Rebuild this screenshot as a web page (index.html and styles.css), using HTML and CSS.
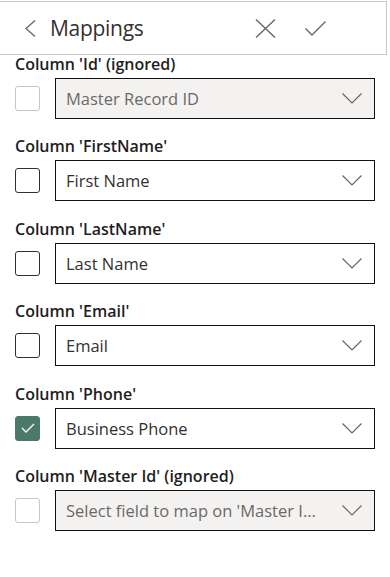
FILE: index.html
```html
<!DOCTYPE html>
<html>
  <head>
    <meta charset="UTF-8" />
    <title>Mappings</title>
    <link rel="stylesheet" href="styles.css">
  </head>

  <body>
    <div class="panel">
      <div class="panel-header">
        <button class="icon-btn back" type="button">
          <svg width="12" height="17" viewBox="0 0 12 17"><path d="M11 0.5 L2 8.5 L11 16.5" fill="none" stroke="#666" stroke-width="1.3"/></svg>
        </button>
        <h2>Mappings</h2>
        <button class="icon-btn close" type="button">
          <svg width="21" height="19" viewBox="0 0 21 19"><path d="M1 0.5 L20 18.5 M20 0.5 L1 18.5" fill="none" stroke="#666" stroke-width="1.4"/></svg>
        </button>
        <button class="icon-btn ok" type="button">
          <svg width="21" height="15" viewBox="0 0 21 15"><path d="M0.5 7.5 L7 14 L20.5 0.5" fill="none" stroke="#666" stroke-width="1.4"/></svg>
        </button>
      </div>

      <div class="mapping-list">
        <div class="mapping">
          <label>Column 'Id' (ignored)</label>
          <div class="mapping-row">
            <span class="check disabled"></span>
            <div class="select disabled">
              <span>Master Record ID</span>
              <svg class="chevron" width="20" height="11" viewBox="0 0 20 11"><path d="M0.5 0.5 L10 10 L19.5 0.5" fill="none" stroke="#666" stroke-width="1.2"/></svg>
            </div>
          </div>
        </div>

        <div class="mapping">
          <label>Column 'FirstName'</label>
          <div class="mapping-row">
            <span class="check"></span>
            <div class="select">
              <span>First Name</span>
              <svg class="chevron" width="20" height="11" viewBox="0 0 20 11"><path d="M0.5 0.5 L10 10 L19.5 0.5" fill="none" stroke="#666" stroke-width="1.2"/></svg>
            </div>
          </div>
        </div>

        <div class="mapping">
          <label>Column 'LastName'</label>
          <div class="mapping-row">
            <span class="check"></span>
            <div class="select">
              <span>Last Name</span>
              <svg class="chevron" width="20" height="11" viewBox="0 0 20 11"><path d="M0.5 0.5 L10 10 L19.5 0.5" fill="none" stroke="#666" stroke-width="1.2"/></svg>
            </div>
          </div>
        </div>

        <div class="mapping">
          <label>Column 'Email'</label>
          <div class="mapping-row">
            <span class="check"></span>
            <div class="select">
              <span>Email</span>
              <svg class="chevron" width="20" height="11" viewBox="0 0 20 11"><path d="M0.5 0.5 L10 10 L19.5 0.5" fill="none" stroke="#666" stroke-width="1.2"/></svg>
            </div>
          </div>
        </div>

        <div class="mapping">
          <label>Column 'Phone'</label>
          <div class="mapping-row">
            <span class="check checked">
              <svg width="14" height="10" viewBox="0 0 14 10"><path d="M1 5 L5 9 L13 1" fill="none" stroke="#fff" stroke-width="1.3"/></svg>
            </span>
            <div class="select">
              <span>Business Phone</span>
              <svg class="chevron" width="20" height="11" viewBox="0 0 20 11"><path d="M0.5 0.5 L10 10 L19.5 0.5" fill="none" stroke="#666" stroke-width="1.2"/></svg>
            </div>
          </div>
        </div>

        <div class="mapping">
          <label>Column 'Master Id' (ignored)</label>
          <div class="mapping-row">
            <span class="check disabled"></span>
            <div class="select disabled">
              <span>Select field to map on 'Master Id'</span>
              <svg class="chevron" width="20" height="11" viewBox="0 0 20 11"><path d="M0.5 0.5 L10 10 L19.5 0.5" fill="none" stroke="#666" stroke-width="1.2"/></svg>
            </div>
          </div>
        </div>
      </div>
    </div>
  </body>
</html>
```

FILE: styles.css
```css
* {
  box-sizing: border-box;
}

body {
  margin: 0;
  font-family: "Open Sans", "Noto Sans", sans-serif;
  background-color: #fff;
  color: #252423;
}

.panel {
  width: 390px;
}

.panel-header {
  width: 387px;
  height: 54px;
  margin-top: 1px;
  border-top: 1px solid #c8c8c8;
  border-right: 1px solid #c8c8c8;
  border-bottom: 1px solid #c8c8c8;
  display: flex;
  align-items: center;
}

.panel-header h2 {
  flex: auto;
  margin: 0 0 1px 14px;
  font-size: 21px;
  font-weight: 400;
  color: #323130;
  letter-spacing: -0.3px;
}

.icon-btn {
  border: none;
  outline: none;
  background: none;
  padding: 0;
  display: flex;
  cursor: pointer;
}

.icon-btn.back {
  margin-left: 24px;
}

.icon-btn.close {
  margin-right: 29px;
}

.icon-btn.ok {
  margin-right: 60px;
}

.mapping-list {
  padding: 0 15px 0 15px;
}

.mapping {
  padding-top: 17.4px;
}

.mapping:first-child {
  padding-top: 0;
  margin-top: -1px;
}

.mapping label {
  display: block;
  font-size: 16px;
  font-weight: 600;
  line-height: 20px;
  margin-bottom: 4px;
  color: #1f1e1d;
}

.mapping-row {
  display: flex;
  align-items: center;
}

.check {
  width: 25px;
  height: 25px;
  border: 1px solid #323130;
  border-radius: 3px;
  margin-right: 15px;
  flex: none;
  display: flex;
  align-items: center;
  justify-content: center;
}

.check.disabled {
  border-color: #c8c6c4;
}

.check.checked {
  background-color: #4b7a6b;
  border-color: #4b7a6b;
}

.select {
  flex: none;
  width: 320px;
  height: 41px;
  border: 1.5px solid #111;
  display: flex;
  align-items: center;
  padding: 0 12px 0 10px;
  font-size: 16.5px;
  color: #323130;
}

.select span {
  flex: auto;
  white-space: nowrap;
  overflow: hidden;
  text-overflow: ellipsis;
  margin-right: 26px;
}

.select.disabled {
  background-color: #f3f2f1;
  color: #6b6967;
}

.chevron {
  flex: none;
}
```
